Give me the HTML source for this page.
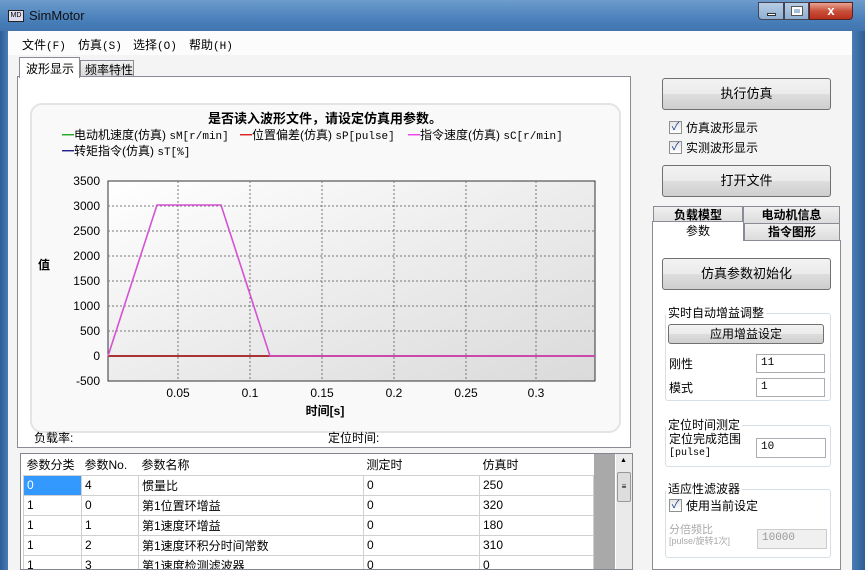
<!DOCTYPE html>
<html><head><meta charset="utf-8"><style>
*{margin:0;padding:0;box-sizing:border-box}
body{width:865px;height:570px;overflow:hidden;position:relative;font-family:"Liberation Sans","Noto Sans CJK SC",sans-serif;font-size:12px;color:#000;background:#3d6fa6}
.a{position:absolute;white-space:nowrap}
.m{font-family:"Liberation Mono",monospace;font-size:11px}
.btn{position:absolute;border:1px solid #707070;border-radius:3px;background:linear-gradient(#f2f2f2,#ebebeb 50%,#dddddd 51%,#cfcfcf);text-align:center;font-size:13px}
.cb{position:absolute;width:13px;height:13px;border:1px solid #8e8f8f;background:linear-gradient(#e6e6e6,#fff);font-size:11px;line-height:11px;text-align:center;color:#1f3f8f}
.gb{position:absolute;border:1px solid #d5dfe5;border-radius:3px}
.gt{position:absolute;background:#fff;font-size:12px;padding:0 2px}
.in{position:absolute;background:#fff;border:1px solid #abadb3;font-size:11px;padding:2px 4px;font-family:"Liberation Mono","Noto Sans CJK SC",monospace}
table{border-collapse:collapse;font-size:12px}
td{border:1px solid #d0d0d0;height:20px;padding:0 3px;white-space:nowrap}
</style></head><body>
<div class="a" style="left:0;top:0;width:865px;height:32px;background:linear-gradient(#6d9ccc,#4a80bb 60%,#3f74ad)"></div>
<div class="a" style="left:8px;top:10px;width:16px;height:12px;border:1px solid #222;background:#dde;font-size:7px;line-height:10px;text-align:center">MD</div>
<div class="a" style="left:29px;top:8px;font-size:13px;color:#111">SimMotor</div>
<div class="a" style="left:758px;top:2px;width:26px;height:18px;border:1px solid #445;border-radius:0 0 0 4px;background:linear-gradient(#b8cde4,#8fafd2)"><div class="a" style="left:8px;top:10px;width:9px;height:3px;background:#fff;border:1px solid #333"></div></div>
<div class="a" style="left:784px;top:2px;width:25px;height:18px;border:1px solid #445;background:linear-gradient(#b8cde4,#8fafd2)"><div class="a" style="left:7px;top:4px;width:10px;height:8px;border:2px solid #fff;outline:1px solid #555"></div></div>
<div class="a" style="left:809px;top:2px;width:44px;height:18px;border:1px solid #522;border-radius:0 0 4px 0;background:linear-gradient(#e8a493,#c9503a 50%,#b8301c);color:#fff;font-weight:bold;text-align:center;font-size:13px;line-height:16px">x</div>
<div class="a" style="left:8px;top:31px;width:844px;height:539px;background:#f4f4f4"></div>
<div class="a" style="left:8px;top:31px;width:844px;height:24px;background:#fcfcfc"></div>
<div class="a" style="left:22px;top:36px">文件<span class="m">(F)</span></div>
<div class="a" style="left:78px;top:36px">仿真<span class="m">(S)</span></div>
<div class="a" style="left:133px;top:36px">选择<span class="m">(O)</span></div>
<div class="a" style="left:189px;top:36px">帮助<span class="m">(H)</span></div>
<div class="a" style="left:17px;top:76px;width:614px;height:372px;background:#fff;border:1px solid #898c95"></div>
<div class="a" style="left:19px;top:57px;width:61px;height:21px;background:#fff;border:1px solid #898c95;border-bottom:none;font-size:12px;padding:2px 0 0 6px">波形显示</div>
<div class="a" style="left:80px;top:60px;width:54px;height:17px;background:linear-gradient(#f2f2f2,#d9d9d9);border:1px solid #898c95;font-size:12px;padding:0 0 0 4px">频率特性</div>
<div class="a" style="left:30px;top:103px;width:591px;height:330px;background:#f9f9f9;border:2px solid #e4e4e4;border-radius:12px"></div>
<div class="a" style="left:208px;top:108px;font-size:13px;font-weight:bold">是否读入波形文件，请设定仿真用参数。</div>
<div class="a" style="left:62px;top:126px;font-size:12px"><span style="color:#2a2">━</span>电动机速度(仿真) <span class="m">sM[r/min]</span></div>
<div class="a" style="left:240px;top:126px;font-size:12px"><span style="color:#d22">━</span>位置偏差(仿真) <span class="m">sP[pulse]</span></div>
<div class="a" style="left:408px;top:126px;font-size:12px"><span style="color:#e4e">━</span>指令速度(仿真) <span class="m">sC[r/min]</span></div>
<div class="a" style="left:62px;top:142px;font-size:12px"><span style="color:#228">━</span>转矩指令(仿真) <span class="m">sT[%]</span></div>
<div class="a" style="left:38px;top:256px;font-size:12px;font-weight:bold">值</div>
<svg class="a" style="left:60px;top:170px" width="550" height="250">
<defs><linearGradient id="g" x1="0" y1="0" x2="1" y2="1"><stop offset="0" stop-color="#fff"/><stop offset="1" stop-color="#dadada"/></linearGradient></defs>
<rect x="48" y="11" width="487" height="200" fill="url(#g)" stroke="#333"/>
<g stroke="#777" stroke-dasharray="2,2" stroke-width="1">
<line x1="48" y1="36" x2="535" y2="36"/><line x1="48" y1="61" x2="535" y2="61"/><line x1="48" y1="86" x2="535" y2="86"/><line x1="48" y1="111" x2="535" y2="111"/><line x1="48" y1="136" x2="535" y2="136"/><line x1="48" y1="161" x2="535" y2="161"/>
<line x1="118" y1="11" x2="118" y2="211"/><line x1="190" y1="11" x2="190" y2="211"/><line x1="262" y1="11" x2="262" y2="211"/><line x1="334" y1="11" x2="334" y2="211"/><line x1="406" y1="11" x2="406" y2="211"/><line x1="476" y1="11" x2="476" y2="211"/>
</g>
<line x1="48" y1="186" x2="535" y2="186" stroke="#a33" stroke-width="2"/>
<polyline points="48,186 97,35 161,35 210,186 535,186" fill="none" stroke="#d452d4" stroke-width="1.6"/>
<g font-size="12" text-anchor="end" font-family="Liberation Sans">
<text x="40" y="15">3500</text><text x="40" y="40">3000</text><text x="40" y="65">2500</text><text x="40" y="90">2000</text><text x="40" y="115">1500</text><text x="40" y="140">1000</text><text x="40" y="165">500</text><text x="40" y="190">0</text><text x="40" y="215">-500</text></g>
<g font-size="12" text-anchor="middle" font-family="Liberation Sans">
<text x="118" y="227">0.05</text><text x="190" y="227">0.1</text><text x="262" y="227">0.15</text><text x="334" y="227">0.2</text><text x="406" y="227">0.25</text><text x="476" y="227">0.3</text></g>
<text x="265" y="245" font-size="12" font-weight="bold" text-anchor="middle" font-family="Liberation Sans,Noto Sans CJK SC">时间[s]</text>
</svg>
<div class="a" style="left:34px;top:429px;font-size:12px">负载率:</div>
<div class="a" style="left:328px;top:429px;font-size:12px">定位时间:</div>
<div class="a" style="left:20px;top:453px;width:613px;height:117px;border:1px solid #828790;background:#fff;overflow:hidden">
<table style="position:absolute;left:2px;top:1px;width:571px">
<tr style="background:#fff"><td style="border:none;width:58px">参数分类</td><td style="border:none;width:57px">参数No.</td><td style="border:none;width:225px">参数名称</td><td style="border:none;width:116px">测定时</td><td style="border:none">仿真时</td></tr>
<tr><td style="background:#3399ff;color:#fff">0</td><td>4</td><td>惯量比</td><td>0</td><td>250</td></tr>
<tr><td>1</td><td>0</td><td>第1位置环增益</td><td>0</td><td>320</td></tr>
<tr><td>1</td><td>1</td><td>第1速度环增益</td><td>0</td><td>180</td></tr>
<tr><td>1</td><td>2</td><td>第1速度环积分时间常数</td><td>0</td><td>310</td></tr>
<tr><td>1</td><td>3</td><td>第1速度检测滤波器</td><td>0</td><td>0</td></tr>
</table>
<div class="a" style="left:573px;top:0;width:21px;height:117px;background:#a9a9a9"></div>
<div class="a" style="left:595px;top:0;width:17px;height:117px;background:#eaeaea"><div class="a" style="left:1px;top:18px;width:14px;height:30px;border:1px solid #999;border-radius:2px;background:#ddd;font-size:8px;text-align:center;line-height:28px">≡</div><div class="a" style="left:4px;top:3px;font-size:7px">▲</div></div>
</div>
<div class="btn" style="left:662px;top:78px;width:169px;height:32px;line-height:30px">执行仿真</div>
<div class="cb" style="left:669px;top:121px">✓</div><div class="a" style="left:686px;top:119px;font-size:12px">仿真波形显示</div>
<div class="cb" style="left:669px;top:141px">✓</div><div class="a" style="left:686px;top:139px;font-size:12px">实测波形显示</div>
<div class="btn" style="left:662px;top:165px;width:169px;height:32px;line-height:30px">打开文件</div>
<div class="a" style="left:653px;top:206px;width:90px;height:18px;background:linear-gradient(#f0f0f0,#dcdcdc);border:1px solid #898c95;font-size:12px;text-align:center;font-weight:bold;line-height:16px">负载模型</div>
<div class="a" style="left:743px;top:206px;width:97px;height:18px;background:linear-gradient(#f0f0f0,#dcdcdc);border:1px solid #898c95;font-size:12px;text-align:center;font-weight:bold;line-height:16px">电动机信息</div>
<div class="a" style="left:652px;top:240px;width:189px;height:330px;background:#fff;border:1px solid #898c95"></div>
<div class="a" style="left:744px;top:223px;width:96px;height:18px;background:linear-gradient(#f0f0f0,#dcdcdc);border:1px solid #898c95;font-size:12px;text-align:center;font-weight:bold;line-height:16px">指令图形</div>
<div class="a" style="left:652px;top:221px;width:92px;height:20px;background:#fff;border:1px solid #898c95;border-bottom:none;font-size:12px;text-align:center;line-height:18px">参数</div>
<div class="btn" style="left:662px;top:258px;width:169px;height:32px;line-height:30px">仿真参数初始化</div>
<div class="gb" style="left:665px;top:313px;width:166px;height:88px"></div><div class="gt" style="left:666px;top:304px">实时自动增益调整</div>
<div class="btn" style="left:668px;top:324px;width:156px;height:20px;line-height:18px;font-size:12px">应用增益设定</div>
<div class="a" style="left:669px;top:355px">刚性</div><div class="in" style="left:756px;top:354px;width:69px;height:19px">11</div>
<div class="a" style="left:669px;top:379px">模式</div><div class="in" style="left:756px;top:378px;width:69px;height:19px">1</div>
<div class="gb" style="left:665px;top:425px;width:166px;height:42px"></div><div class="gt" style="left:666px;top:416px">定位时间测定</div>
<div class="a" style="left:669px;top:433px;line-height:12px">定位完成范围<br><span style="font-size:10px;font-family:'Liberation Mono',monospace">[pulse]</span></div>
<div class="in" style="left:756px;top:438px;width:70px;height:20px">10</div>
<div class="gb" style="left:665px;top:489px;width:166px;height:69px"></div><div class="gt" style="left:666px;top:480px">适应性滤波器</div>
<div class="cb" style="left:669px;top:499px">✓</div><div class="a" style="left:686px;top:497px;font-size:12px">使用当前设定</div>
<div class="a" style="left:669px;top:525px;line-height:11px;color:#aaa;font-size:11px">分倍频比<br><span style="font-size:9px">[pulse/旋转1次]</span></div>
<div class="in" style="left:757px;top:529px;width:70px;height:20px;background:#f0f0f0;color:#999;border-color:#ccc">10000</div>
<div class="a" style="left:852px;top:31px;width:13px;height:539px;background:linear-gradient(90deg,#4a7db5,#2d5d95)"></div>
<div class="a" style="left:0;top:31px;width:8px;height:539px;background:linear-gradient(90deg,#2d5d95,#4a7db5)"></div>
</body></html>
